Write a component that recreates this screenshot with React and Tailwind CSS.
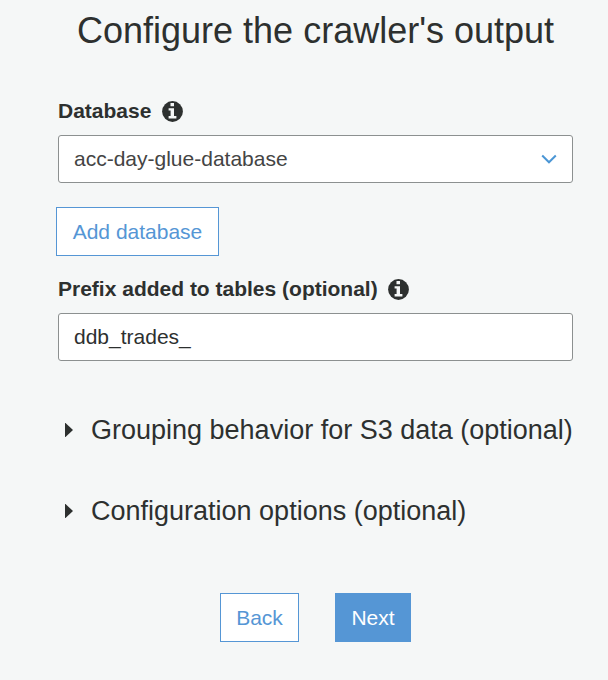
function Info() {
  return (
    <svg className="h-[21px] w-[21px] shrink-0" viewBox="0 0 21 21">
      <circle cx="10.5" cy="10.5" r="10.4" fill="#2d302f" />
      <path d="M8.5 2h3.5v3.3H8.5zM6.6 7.3h5.4v7.8h2.4v2.4H6.6v-2.4h2V9.6h-2z" fill="#f5f7f7" />
    </svg>
  );
}

function Label({ text, width }) {
  return (
    <div className="flex h-6 items-center">
      <span className={"whitespace-nowrap text-[21px] font-bold leading-6 " + width}>{text}</span>
      <Info />
    </div>
  );
}

function Section({ text }) {
  return (
    <div className="flex h-9 items-center">
      <svg className="ml-[7px] mr-[18px] h-[14px] w-2 shrink-0" viewBox="0 0 8 14" fill="#2d302f">
        <path d="M0 0h0.5L8 7L0.5 14H0z" />
      </svg>
      <span className="whitespace-nowrap text-[27px] leading-9">{text}</span>
    </div>
  );
}

export default function App() {
  return (
    <main className="h-[680px] w-[608px] overflow-hidden bg-[#f5f7f7] pl-[58px] pr-[35px] font-['Liberation_Sans',Arial,sans-serif] text-[#2d302f]">
      <h1 className="ml-[19px] h-[99px] whitespace-nowrap pt-[10px] text-[36px] leading-[42px]">Configure the crawler's output</h1>
      <Label text="Database" width="w-[104px]" />
      <div className="mt-3 flex h-12 items-center justify-between rounded-[3px] border border-[#8c9090] bg-white pl-[15px] pr-[15px] text-[21px] leading-6 text-[#444444]">
        <span>acc-day-glue-database</span>
        <svg className="h-[10px] w-4" viewBox="0 0 16 10" fill="none" stroke="#4b96d5" strokeWidth="2"><path d="M1.2 1.5L8 8.3L14.8 1.5" /></svg>
      </div>
      <button className="-ml-[2px] mt-6 flex h-[49px] w-[163px] items-center justify-center border border-[#5596d5] bg-white text-[21px] leading-6 text-[#5596d5]">Add database</button>
      <div className="mt-[21px]"><Label text="Prefix added to tables (optional)" width="w-[330px]" /></div>
      <div className="mt-3 flex h-12 items-center rounded-[3px] border border-[#8c9090] bg-white pl-[15px] text-[21px] leading-6">ddb_trades_</div>
      <div className="mt-[51px]"><Section text="Grouping behavior for S3 data (optional)" /></div>
      <div className="mt-[45px]"><Section text="Configuration options (optional)" /></div>
      <div className="ml-[162px] mt-[64px] flex gap-9 text-[21px] leading-6">
        <button className="h-[49px] w-[79px] border border-[#5596d5] bg-white text-[#5596d5]">Back</button>
        <button className="h-[49px] w-[76px] bg-[#5596d5] text-white">Next</button>
      </div>
    </main>
  );
}
